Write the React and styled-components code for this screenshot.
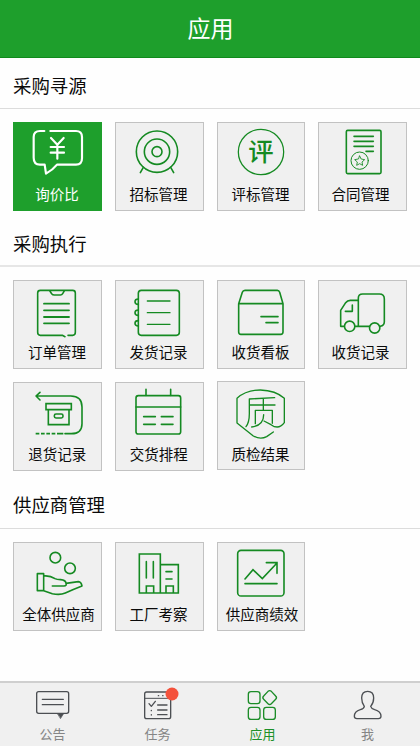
import React from "react";
import styled, { createGlobalStyle } from "styled-components";

const GlobalStyle = createGlobalStyle`
  * { box-sizing: border-box; }
  body {
    margin: 0;
    background: #fefefe;
    font-family: "Noto Sans CJK SC", "Noto Sans", sans-serif;
  }
`;

const Screen = styled.div`
  display: flex;
  flex-direction: column;
  width: 420px;
  height: 746px;
  overflow: hidden;
  background: #fefefe;
`;

const Header = styled.header`
  flex: none;
  height: 58px;
  padding: 0 0 3px 1px;
  display: flex;
  align-items: center;
  justify-content: center;
  background: #1e9f2c;
  border-bottom: 1px solid #108a1c;
  color: #fff;
  font-size: 23px;
  line-height: 1;
`;

const Content = styled.main`
  flex: 1;
  min-height: 0;
`;

const SectionTitle = styled.h2`
  margin: 0;
  height: ${(p) => p.$height}px;
  padding: 0 0 ${(p) => p.$gap}px 13px;
  display: flex;
  align-items: flex-end;
  border-bottom: ${(p) => p.$line}px solid ${(p) => (p.$line > 1 ? "#e6e6e6" : "#dcdcdc")};
  color: #0a0a0a;
  font-size: 18.4px;
  font-weight: 400;
  line-height: 18px;
`;

const TileGrid = styled.div`
  display: grid;
  grid-template-columns: 89px 89px 88px 89px;
  column-gap: 13px;
  row-gap: 13px;
  padding: 13px 13px 0;
`;

const Tile = styled.div`
  height: 89px;
  margin-top: ${(p) => (p.$raised ? -1 : 0)}px;
  display: flex;
  flex-direction: column;
  align-items: center;
  background: ${(p) => (p.$active ? "#1e9f2c" : "#f0f0f0")};
  box-shadow: inset 0 0 0 1px ${(p) => (p.$active ? "#1e9f2c" : "#c2c2c2")};
  color: ${(p) => (p.$active ? "#fff" : "#0a0a0a")};
`;

const TileLabel = styled.span`
  margin-top: ${(p) => (p.$raised ? 3 : 2)}px;
  padding-left: ${(p) => Math.max(p.$shift, 0) * 2}px;
  padding-right: ${(p) => Math.max(-p.$shift, 0) * 2 + 1}px;
  font-size: 14.5px;
  line-height: 20px;
  white-space: nowrap;
`;

const TileArt = styled.svg`
  flex: none;
  display: block;
  width: 89px;
  height: 60px;
  fill: none;
  stroke: ${(p) => (p.$active ? "#fff" : "#158a22")};
  stroke-width: 4.8;
  stroke-linecap: round;
  stroke-linejoin: round;
`;

const Glyph = styled.text`
  fill: #158a22;
  stroke: none;
  font-size: ${(p) => p.$size}px;
  font-weight: ${(p) => p.$weight};
  text-anchor: middle;
`;

const TabBar = styled.nav`
  flex: none;
  height: 65px;
  display: grid;
  grid-template-columns: repeat(4, 105px);
  background: #f0f0f0;
  border-top: 2px solid #cfcfcf;
`;

const Tab = styled.div`
  display: flex;
  flex-direction: column;
  align-items: center;
  color: ${(p) => (p.$active ? "#1c9029" : "#858585")};
  font-size: 13px;
  line-height: 16px;
`;

const TabArt = styled.svg`
  display: block;
  width: 105px;
  height: 43px;
  fill: none;
  stroke: ${(p) => (p.$active ? "#1c8c28" : "#4c4f53")};
  stroke-width: 4;
  stroke-linecap: round;
  stroke-linejoin: round;
`;

const sections = [
  {
    title: "采购寻源",
    height: 51,
    line: 1,
    gap: 14,
    tiles: [
      {
        label: "询价比", active: true, shift: 0, box: "39 21 267 180",
        art: (
          <g strokeWidth="6.5">
            <path d="M133 48H120Q101 48 101 66V128Q101 149 120 149H134L138 176Q159 164 171 149H228Q246 149 246 130V66Q246 48 228 48H151" />
            <path d="M153 69L172 89L191 69M172 89V131M152 96H192M152 113H192" />
          </g>
        ),
      },
      {
        label: "招标管理", shift: -0.5, box: "345 21 267 180",
        art: (
          <>
            <circle cx="471" cy="110" r="62" />
            <circle cx="471" cy="110" r="38" />
            <circle cx="471" cy="110" r="15" />
            <path d="M430 157L421 173M512 157L521 173" />
          </>
        ),
      },
      {
        label: "评标管理", shift: 0, box: "21 21 267 180",
        art: (
          <>
            <circle cx="153" cy="111" r="68" strokeWidth="3.8" />
            <Glyph x="153" y="139" $size={76} $weight={500}>评</Glyph>
          </>
        ),
      },
      {
        label: "合同管理", shift: -1.5, box: "324 21 267 180",
        art: (
          <>
            <rect x="409" y="46" width="104" height="130" rx="4" />
            <path d="M432 64H490M432 79H490M432 94H490M468 109H490" />
            <circle cx="449" cy="137" r="26" strokeWidth="3" />
            <path strokeWidth="2.6" d="M449 123L453.5 132L464 134L456 141L458 151L449 146L440 151L442 141L434 134L444.5 132Z" />
          </>
        ),
      },
    ],
  },
  {
    title: "采购执行",
    height: 56,
    line: 2,
    gap: 13,
    tiles: [
      {
        label: "订单管理", shift: 0, box: "39 181 267 180",
        art: (
          <>
            <path d="M187 347H121Q113 347 113 338V220Q113 212 121 212H218Q226 212 226 220V338Q226 347 218 347H204M187 347L195 351M148 212L155 222Q158 226 163 226H181Q186 226 188 222L194 212" />
            <path strokeWidth="5.5" d="M132 252H207M132 272H207M132 292H207M132 311H207" />
          </>
        ),
      },
      {
        label: "发货记录", shift: -0.5, box: "345 181 267 180",
        art: (
          <>
            <rect x="415" y="212" width="123" height="135" rx="9" />
            <path strokeWidth="4" d="M442 244H510M442 279H510M442 314H510" />
            <path d="M415 238Q405 238 405 246Q405 254 415 254M415 271Q405 271 405 279Q405 287 415 287M415 303Q405 303 405 311Q405 319 415 319" />
          </>
        ),
      },
      {
        label: "收货看板", shift: 0, box: "21 181 267 180",
        art: (
          <>
            <path d="M86 252L97 218Q99 212 105 212H202Q207 212 209 218L219 252V337Q219 344 212 344H93Q86 344 86 337ZM86 252H219" />
            <path d="M153 291H204M168 309H204" />
          </>
        ),
      },
      {
        label: "收货记录", shift: -1.5, box: "324 181 267 180",
        art: (
          <>
            <path d="M403 320H392V272L407 249Q412 242 421 242H445M436 320H478M445 320V235Q445 223 458 223H508Q523 223 523 238V306Q523 317 511 320M427 256V275H406" />
            <circle cx="419" cy="320" r="15.5" />
            <circle cx="494" cy="325" r="15.5" />
          </>
        ),
      },
      {
        label: "退货记录", shift: 0.2, box: "39 21 267 180",
        art: (
          <>
            <path d="M120 52L108 63L120 75M108 63H212Q246 63 246 96V146Q246 176 214 176H195" />
            <path strokeLinecap="butt" d="M107 176H118M123 176H134M139 176H150M155 176H166M171 176H190" />
            <path strokeLinejoin="miter" d="M138 86H214V104H138ZM145 104V149H207V104" />
            <rect x="163" y="117" width="26" height="12" rx="5" />
          </>
        ),
      },
      {
        label: "交货排程", shift: -0.3, box: "345 21 267 180",
        art: (
          <>
            <rect x="408" y="62" width="134" height="115" rx="7" />
            <path d="M408 96H542M438 43V61M512 43V61M431 125H466M484 125H519M431 148H466M484 148H519" />
          </>
        ),
      },
      {
        label: "质检结果", shift: 0, raised: true, box: "21 18 267 180",
        art: (
          <>
            <path strokeWidth="4" d="M190 171L170 185Q151 195 130 183L81 144V70Q108 45 151 45Q197 46 223 70V143Q206 166 183 149L162 138" />
            <path
              strokeWidth="4"
              d="M194 68L118 72V116Q118 142 108 155M160 72V106M120 90H195M136 146V106H187V145M161 119Q161 151 125 156"
            />
          </>
        ),
      },
    ],
  },
  {
    title: "供应商管理",
    height: 58,
    line: 1,
    gap: 15,
    tiles: [
      {
        label: "全体供应商", shift: 1.5, box: "39 37 267 180",
        art: (
          <>
            <circle cx="166" cy="84" r="16" />
            <circle cx="210" cy="116" r="16" />
            <path d="M112 132H131V183H112ZM131 139Q150 137 165 147Q170 150 182 150Q197 151 198 161L235 156Q244 157 246 169Q220 179 196 190Q180 197 157 192L131 183M157 169H192Q201 169 198 161" />
          </>
        ),
      },
      {
        label: "工厂考察", shift: -0.5, box: "345 37 267 180",
        art: (
          <g strokeLinejoin="miter">
            <path d="M418 73H481V190H418ZM481 105H535V190H481M439 190V169H461V190M498 190V169H520V190" />
            <path d="M439 96V145M460 96V145M498 126H516M498 148H516" />
          </g>
        ),
      },
      {
        label: "供应商绩效", shift: 1.5, box: "21 37 267 180",
        art: (
          <>
            <rect x="83" y="62" width="139" height="137" rx="10" />
            <path strokeLinejoin="miter" d="M105 148L129 120L157 147L201 100M169 99H201V131M105 162H201" />
          </>
        ),
      },
    ],
  },
];

const tabs = [
  {
    label: "公告", box: "0 39 315 129",
    art: (
      <>
        <rect x="110" y="65" width="96" height="65" rx="6" />
        <path d="M127 88H190M127 104H190" />
        <path fill="#4c4f53" strokeWidth="2" d="M174 132H190L182 145Z" />
      </>
    ),
  },
  {
    label: "任务", box: "315 39 315 129",
    art: (
      <>
        <rect x="434" y="66" width="78" height="80" rx="6" />
        <path strokeWidth="3" d="M434 85H512" />
        <path d="M447 101L454 109L466 94M473 105H501M473 120H501M473 134H501M454 121V122M454 134V135M475 77H476M488 77H489" />
        <circle cx="516" cy="72" r="19.5" fill="#f4513b" stroke="none" />
      </>
    ),
  },
  {
    label: "应用", active: true, box: "0 39 315 129",
    art: (
      <>
        <rect x="115" y="65" width="35" height="36" rx="8" />
        <rect x="115" y="112" width="35" height="36" rx="8" />
        <rect x="161" y="112" width="35" height="36" rx="8" />
        <path d="M174 64Q179 60 184 64L197 78Q202 83 197 88L184 101Q179 106 174 101L161 88Q156 83 161 78Z" />
      </>
    ),
  },
  {
    label: "我", box: "315 39 315 129",
    art: (
      <path d="M463 109Q455 99 455 84Q455 64 473 64Q491 64 491 84Q491 99 482 109Q484 116 494 119Q513 124 513 139Q513 146 505 146H441Q433 146 433 139Q433 124 451 119Q462 116 463 109Z" />
    ),
  },
];

function AppTile({ item }) {
  return (
    <Tile $active={item.active} $raised={item.raised}>
      <TileArt $active={item.active} viewBox={item.box}>{item.art}</TileArt>
      <TileLabel $shift={item.shift} $raised={item.raised}>{item.label}</TileLabel>
    </Tile>
  );
}

export default function App() {
  return (
    <Screen>
      <GlobalStyle />
      <Header>应用</Header>
      <Content>
        {sections.map((s) => (
          <section key={s.title}>
            <SectionTitle $height={s.height} $line={s.line} $gap={s.gap}>{s.title}</SectionTitle>
            <TileGrid>
              {s.tiles.map((t) => <AppTile key={t.label} item={t} />)}
            </TileGrid>
          </section>
        ))}
      </Content>
      <TabBar>
        {tabs.map((t) => (
          <Tab key={t.label} $active={t.active}>
            <TabArt $active={t.active} viewBox={t.box}>{t.art}</TabArt>
            {t.label}
          </Tab>
        ))}
      </TabBar>
    </Screen>
  );
}
